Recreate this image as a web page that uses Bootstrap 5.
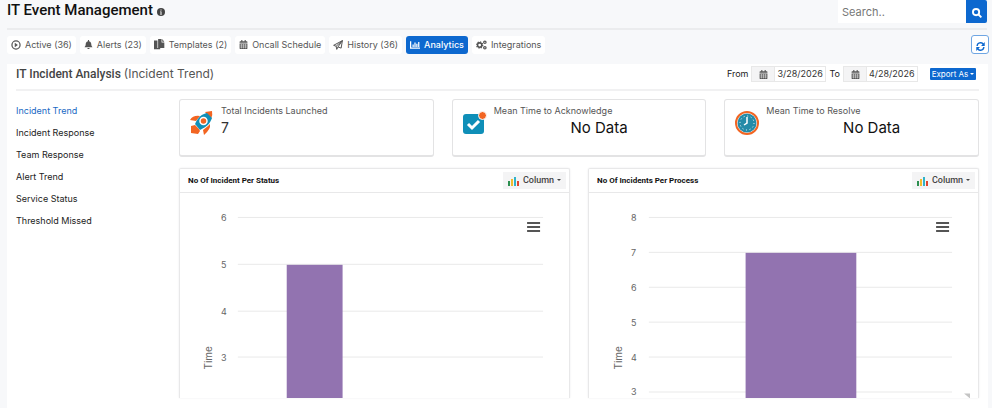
<!DOCTYPE html>
<html lang="en">
<head>
<meta charset="utf-8">
<meta name="viewport" content="width=device-width, initial-scale=1">
<title>IT Event Management</title>
<link href="https://cdn.jsdelivr.net/npm/bootstrap@5.3.0/dist/css/bootstrap.min.css" rel="stylesheet">
<style>
body{font-family:Inter,"Open Sans",sans-serif;font-size:9px;line-height:12px;background:#f7f8fa;color:#222;overflow-x:hidden}
.ui-title{font:500 15px/20px Roboto,sans-serif;color:#111}
.top-bar{height:30px;margin:0 5px 0 7px;border-bottom:2px solid #ebecee}
.search-box{width:149px;height:23px}
.title-row{height:20px}
.search-box .form-control{border:0;border-radius:0;font-size:11px;padding:2px 4px 0;color:#666}
.search-box .form-control::placeholder{color:#777}
.search-box .btn{width:21px;flex:none;padding:0;border-radius:0 2px 2px 0;background:#0d68cf;border:0;line-height:12px}
.tab-bar{height:34px;padding:0 3px 5px 7px}
.tab-bar .nav{gap:4px}
.tab-bar .nav-link{height:18px;padding:0 4px;border-radius:3px;background:#fff;color:#555;display:flex;align-items:center;gap:4px;font-size:9px;white-space:nowrap}
.tab-bar .nav-link.active{background:#0d68cf;color:#fff;font-weight:500}
.refresh-btn{width:18px;height:19px;padding:0;border:1px solid #6fa6e3;border-radius:3px;background:#fff;color:#0d68cf;line-height:12px}
.panel{background:#fff;margin:0 4px 0 7px;min-height:344px;padding:0 9px}
.panel-head{height:27px;padding:0 3px 5px 0;border-bottom:2px solid #f1f1f2}
.panel-title{font:500 12px/16px Roboto,sans-serif;color:#444}
.panel-title small{font:400 12px/16px Inter,sans-serif;color:#555}
.date-row{gap:3px}
.date-group{width:75px;height:16px;border:1px solid #e8e8e8}
.date-group label{width:23px;flex:none;background:#f4f4f5;border-right:1px solid #e8e8e8;color:#555}
.date-group input{flex:1;min-width:0;border:0;padding:0 1px 0 2px;font-size:9px;color:#333;background:#fff}
.export-btn{width:46px;height:12px;margin-left:9px;padding:0;border:0;border-radius:1px;background:#0d68cf;font-size:8px;line-height:12px;white-space:nowrap}
.export-btn::after,.col-btn::after{border-width:2px;margin-left:2px;vertical-align:2px}
.side-nav{width:163px;padding-top:14px}
.side-nav a{display:block;font-size:9px;line-height:12px;margin-bottom:10px;color:#222;text-decoration:none}
.side-nav a.current{color:#1769c4}
.content-area{padding-top:8px;min-width:0}
.stats{gap:18px}
.stat{flex:1;height:58px;border:1px solid #e3e3e4;border-bottom-width:2px;border-radius:3px;padding:5px 10px}
.stat-icon{width:24px;height:24px;margin-top:6px;flex:none}
.stat-body{margin-left:7px;color:#555}
.stat-value{font-size:14px;line-height:20px;margin-top:1px;color:#333}
.stat-value.none{font-size:15px;text-align:center;padding-left:9px;color:#111}
.charts{gap:18px;margin-top:11px}
.chart-box{flex:1;min-width:0;border:1px solid #e8e8e9;border-bottom:0;border-radius:2px 2px 0 0;box-shadow:0 0 2px #e9e9ea}
.chart-head{height:24px;padding:0 3px 0 8px;border-bottom:1px solid #e8e8e9;font:700 8px/12px Roboto,sans-serif;color:#111}
.col-btn{width:63px;height:17px;padding:0;border:0;border-radius:0;background:#f4f4f5;font:500 9px/12px Roboto,sans-serif;color:#444}
.col-btn::after{margin-left:3px}
.chart-box svg.plot{display:block;width:100%;height:auto}
.plot text{font:9px Inter,sans-serif;fill:#666}
.plot .axis-name{font-size:10px}
</style>
<script src="https://cdn.jsdelivr.net/npm/bootstrap@5.3.0/dist/js/bootstrap.bundle.min.js"></script>
</head>
<body>
<svg width="0" height="0" class="position-absolute" aria-hidden="true">
<symbol id="cal" viewBox="0 0 16 16"><path fill="currentColor" d="M4 0h2v2h4V0h2v2h2l1 1v2H1V3l1-1h2zM1 6h14v9l-1 1H2l-1-1z"/><path stroke="#fff" stroke-width=".8" fill="none" d="M1 9h14M1 12.500h14M4.500 7v8M8 7v8M11.500 7v8"/></symbol>
<symbol id="cols" viewBox="0 0 11 11"><path fill="#2d8f50" d="M0 5h2v5H0z"/><path fill="#f2bd2c" d="M3 3h2v7H3z"/><path fill="#31b3c9" d="M6 1h2v9H6z"/><path fill="#e0452f" d="M9 5h2v5H9z"/></symbol>
</svg>
<header class="top-bar d-flex justify-content-between">
<div class="title-row d-flex align-items-center gap-1"><h1 class="ui-title m-0">IT Event Management</h1><svg width="8" height="8" viewBox="0 0 16 16" class="mt-1"><circle cx="8" cy="8" r="8" fill="#444"/><path d="M6 7h3v5h1v1H6v-1h1V8H6zM7 3h2v2H7z" fill="#fff"/></svg></div>
<form class="search-box d-flex"><input class="form-control" type="text" placeholder="Search.." aria-label="Search"><button class="btn btn-primary" type="button" aria-label="Search"><svg width="10" height="10" viewBox="0 0 16 16" fill="none" stroke="#fff" stroke-width="3"><circle cx="6.500" cy="6.500" r="5"/><path d="M10 10l5 5"/></svg></button></form>
</header>
<div class="tab-bar d-flex align-items-center justify-content-between">
<nav class="nav flex-nowrap">
<a class="nav-link" href="#"><svg width="10" height="10" viewBox="0 0 16 16"><circle cx="8" cy="8" r="6.500" fill="none" stroke="currentColor" stroke-width="2"/><path d="M6 4.500l5 3.500-5 3.500z" fill="currentColor"/></svg>Active (36)</a>
<a class="nav-link" href="#"><svg width="9" height="9" viewBox="0 0 16 16" fill="currentColor"><path d="M7 0h2v2c3 .5 4 3 4 6 0 2 1 3 2 5H1c1-2 2-3 2-5 0-3 1-5.500 4-6zM6 14h4c0 3-4 3-4 0z"/></svg>Alerts (23)</a>
<a class="nav-link" href="#"><svg width="11" height="11" viewBox="0 0 16 16" fill="currentColor"><path d="M0 2h5v11h4v2H0zM6 0h5v5h4v8H6zM12 0l3 4h-3z"/></svg>Templates (2)</a>
<a class="nav-link" href="#"><svg width="9" height="9"><use href="#cal"/></svg>Oncall Schedule</a>
<a class="nav-link" href="#"><svg width="10" height="10" viewBox="0 0 16 16" fill="none" stroke="currentColor" stroke-width="1.600"><path d="M1 8.500L15 1l-2 12-5-2-2 4-1-5zM5 10l10-9-7 10"/></svg>History (36)</a>
<a class="nav-link active" aria-current="page" href="#"><svg width="10" height="10" viewBox="0 0 16 16" fill="currentColor"><path d="M0 2h2v10h14v2H0zM4 7h2v4H4zM7 4h2v7H7zM10 6h2v5h-2zM13 3h2v8h-2z"/></svg>Analytics</a>
<a class="nav-link" href="#"><svg width="11" height="10" viewBox="0 0 18 16" fill="none" stroke="currentColor"><circle cx="6" cy="8" r="3.500" stroke-width="2.500"/><circle cx="6" cy="8" r="5" stroke-width="2" stroke-dasharray="2 1.900"/><circle cx="14.500" cy="3.500" r="2" stroke-width="2"/><circle cx="14.500" cy="12.500" r="2" stroke-width="2"/></svg>Integrations</a>
</nav>
<button class="btn refresh-btn" type="button" aria-label="Refresh"><svg width="9" height="9" viewBox="0 0 16 16" fill="none" stroke="currentColor" stroke-width="2.500"><path d="M2 7a6 6 0 0 1 11-3M14 9a6 6 0 0 1-11 3"/><path fill="currentColor" stroke="none" d="M15.500 0v7H9zM.5 16V9H7z"/></svg></button>
</div>
<main class="panel">
<div class="panel-head d-flex justify-content-between align-items-center">
<h2 class="panel-title m-0">IT Incident Analysis <small>(Incident Trend)</small></h2>
<div class="date-row d-flex align-items-center">
<span>From</span>
<div class="date-group d-flex"><label for="from" class="d-flex align-items-center justify-content-center" aria-label="From date"><svg width="9" height="9"><use href="#cal"/></svg></label><input id="from" type="text" value="3/28/2026"></div>
<span>To</span>
<div class="date-group d-flex"><label for="to" class="d-flex align-items-center justify-content-center" aria-label="To date"><svg width="9" height="9"><use href="#cal"/></svg></label><input id="to" type="text" value="4/28/2026"></div>
<button type="button" class="btn btn-primary export-btn dropdown-toggle">Export As</button>
</div>
</div>
<div class="d-flex">
<nav class="side-nav flex-shrink-0"><a class="current" href="#">Incident Trend</a><a href="#">Incident Response</a><a href="#">Team Response</a><a href="#">Alert Trend</a><a href="#">Service Status</a><a href="#">Threshold Missed</a></nav>
<section class="content-area flex-grow-1">
<div class="stats d-flex">
<div class="stat d-flex"><svg class="stat-icon" viewBox="0 0 24 24"><path fill="#f26522" d="M15 1l7-1q1 4-1 8zM0 9q3-5 10-4l-4 5zM13 19l5-4 2-2q1 5-6 11zM1 15l4-1 4 4 1 2-2 3-7-1z"/><path fill="#0f8fb8" d="M5 13C8 6 12 3 17 2l5 5c-2 6-6 9-12 12z"/><circle cx="13.500" cy="10" r="3.500" fill="#f26522" stroke="#fff" stroke-width="1.500"/></svg><div class="stat-body">Total Incidents Launched<div class="stat-value">7</div></div></div>
<div class="stat d-flex"><svg class="stat-icon" viewBox="0 0 24 24"><rect x="0" y="3" width="21" height="20" rx="3" fill="#0f8fb8"/><path d="M5 13l4 4 7-7" fill="none" stroke="#fff" stroke-width="3"/><circle cx="19.500" cy="4.500" r="4" fill="#f26522" stroke="#fff"/></svg><div class="stat-body flex-grow-1">Mean Time to Acknowledge<div class="stat-value none">No Data</div></div></div>
<div class="stat d-flex"><svg class="stat-icon" viewBox="0 0 24 24"><circle cx="12" cy="12" r="11" fill="#fff" stroke="#f26522" stroke-width="2"/><circle cx="12" cy="12" r="9.500" fill="#248ba8"/><circle cx="12" cy="12" r="7" fill="none" stroke="#fff" stroke-dasharray="1 2.665"/><path d="M12 6v6l-3 2" fill="none" stroke="#fff" stroke-width="1.500"/></svg><div class="stat-body flex-grow-1">Mean Time to Resolve<div class="stat-value none">No Data</div></div></div>
</div>
<div class="charts d-flex">
<div class="chart-box"><div class="chart-head d-flex justify-content-between align-items-center">No Of Incident Per Status<button class="btn col-btn dropdown-toggle" type="button"><svg width="11" height="11" class="me-1"><use href="#cols"/></svg>Column</button></div>
<svg class="plot" viewBox="0 0 390 206"><path stroke="#e9e9e9" d="M58 24.500h306M58 71.500h306M58 118.500h306M58 164.500h306"/><rect x="107" y="72" width="56" height="134" fill="#9273b0"/><text x="41" y="28">6</text><text x="41" y="75">5</text><text x="41" y="122">4</text><text x="41" y="168">3</text><text class="axis-name" transform="translate(32 177) rotate(-90)">Time</text><path stroke="#555" stroke-width="2" d="M348 30h13M348 34h13M348 38h13"/></svg></div>
<div class="chart-box"><div class="chart-head d-flex justify-content-between align-items-center">No Of Incidents Per Process<button class="btn col-btn dropdown-toggle" type="button"><svg width="11" height="11" class="me-1"><use href="#cols"/></svg>Column</button></div>
<svg class="plot" viewBox="0 0 390 206"><path stroke="#e9e9e9" d="M60 24.500h304M60 59.500h304M60 94.500h304M60 129.500h304M60 164.500h304M60 199.500h304"/><rect x="157" y="60" width="111" height="146" fill="#9273b0"/><text x="42" y="28">8</text><text x="42" y="63">7</text><text x="42" y="98">6</text><text x="42" y="133">5</text><text x="42" y="168">4</text><text x="42" y="203">3</text><text class="axis-name" transform="translate(33 177) rotate(-90)">Time</text><path stroke="#555" stroke-width="2" d="M348 30h13M348 34h13M348 38h13"/><path fill="#c4c4c4" d="M376 201h6v5z"/></svg></div>
</div>
</section>
</div>
</main>
</body>
</html>
